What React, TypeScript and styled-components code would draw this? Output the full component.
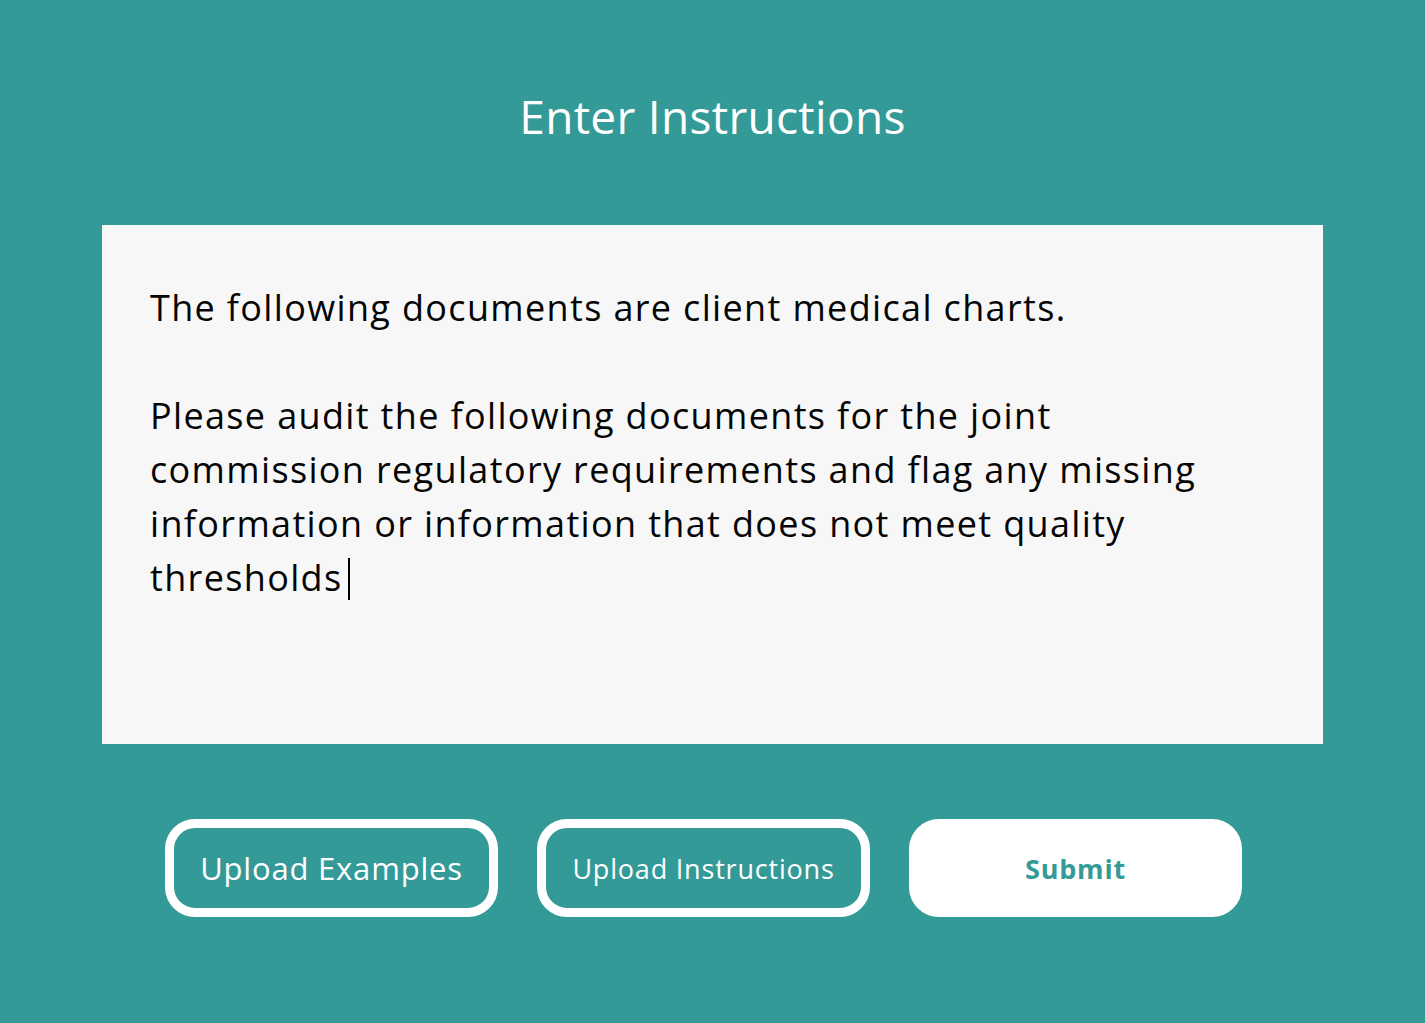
import React from "react";
import styled, { createGlobalStyle } from "styled-components";

const GlobalStyle = createGlobalStyle`
  html, body {
    margin: 0;
    padding: 0;
    background: #349a98;
  }
  body {
    font-family: "Open Sans", "Liberation Sans", sans-serif;
  }
`;

const Page = styled.div`
  min-height: 1023px;
  display: flex;
  flex-direction: column;
  align-items: center;
  background: #349a98;
`;

const Title = styled.h1`
  margin: 86px 0 0;
  height: 60px;
  line-height: 60px;
  font-size: 46px;
  font-weight: 400;
  color: #ffffff;
  letter-spacing: 0.3px;
`;

const Panel = styled.div`
  margin-top: 79px;
  width: 1221px;
  height: 519px;
  box-sizing: border-box;
  padding: 56px 48px 0;
  background: #f7f7f7;
  color: #050505;
  font-size: 36px;
  letter-spacing: 1.35px;
  line-height: 54px;
  white-space: pre;
`;

const Caret = styled.span`
  display: inline-block;
  width: 2px;
  height: 42px;
  margin-left: 5px;
  vertical-align: -9px;
  background: #000000;
`;

const Actions = styled.div`
  margin-top: 75px;
  width: 1221px;
  box-sizing: border-box;
  padding-left: 63px;
  display: flex;
  gap: 39px;
`;

const Button = styled.button<{ $primary?: boolean; $size?: number }>`
  width: 333px;
  height: 98px;
  box-sizing: border-box;
  border-radius: 30px;
  border: 9px solid #ffffff;
  background: ${(p) => (p.$primary ? "#ffffff" : "transparent")};
  color: ${(p) => (p.$primary ? "#349a98" : "#ffffff")};
  font-family: "Open Sans", "Liberation Sans", sans-serif;
  font-size: ${(p) => p.$size ?? 28}px;
  font-weight: ${(p) => (p.$primary ? 700 : 400)};
  letter-spacing: 0.8px;
  cursor: pointer;
  padding: 0;
`;

const lines = [
  "The following documents are client medical charts.",
  "",
  "Please audit the following documents for the joint",
  "commission regulatory requirements and flag any missing",
  "information or information that does not meet quality",
];

export default function App() {
  return (
    <Page>
      <GlobalStyle />
      <Title>Enter Instructions</Title>
      <Panel>
        {lines.map((l, i) => (
          <div key={i}>{l || " "}</div>
        ))}
        <div>
          thresholds
          <Caret />
        </div>
      </Panel>
      <Actions>
        <Button $size={31}>Upload Examples</Button>
        <Button $size={27}>Upload Instructions</Button>
        <Button $primary $size={27}>
          Submit
        </Button>
      </Actions>
    </Page>
  );
}
